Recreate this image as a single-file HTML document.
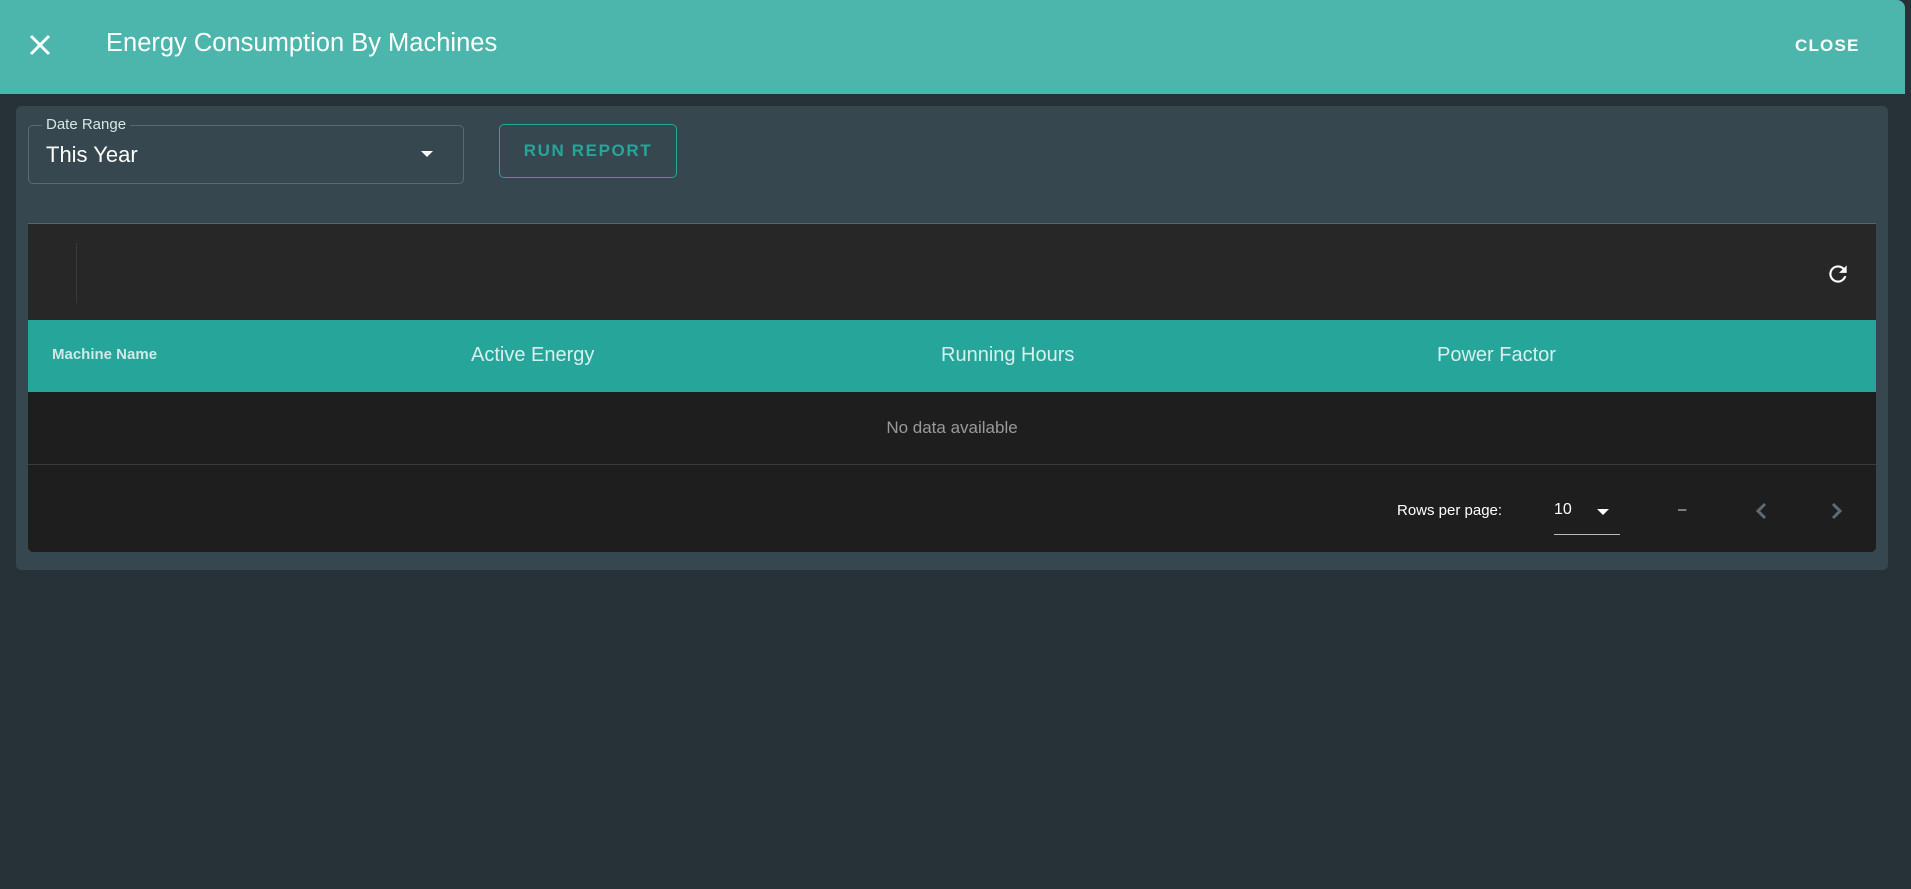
<!DOCTYPE html>
<html><head><style>
*{box-sizing:border-box;margin:0;padding:0}
body{width:1911px;height:889px;background:#263238;font-family:"Liberation Sans",sans-serif;position:relative;overflow:hidden}
.hdr{position:absolute;left:0;top:0;width:1905px;height:94px;background:#4db6ac;border-top-right-radius:8px}
.abs{position:absolute}
</style></head><body>
<div class="hdr">
<svg class="abs" style="left:28px;top:33px" width="24" height="24" viewBox="0 0 24 24"><path d="M3 3L21 21M21 3L3 21" stroke="#fff" stroke-width="3"/></svg>
<div class="abs" style="left:106px;top:29px;font-size:25.5px;color:#fff;">Energy Consumption By Machines</div>
<div class="abs" style="left:1795px;top:36px;font-size:17px;font-weight:bold;color:#fff;letter-spacing:1.2px">CLOSE</div>
</div>
<div class="abs" style="left:16px;top:106px;width:1872px;height:464px;background:#37474f;border-radius:5px"></div>
<div class="abs" style="left:28px;top:125px;width:436px;height:59px;border:1px solid #5b6a72;border-radius:5px"></div>
<div class="abs" style="left:42px;top:116px;padding:0 4px;background:#37474f;font-size:15px;color:#d4e7e4">Date Range</div>
<div class="abs" style="left:46px;top:142px;font-size:22px;color:#fff">This Year</div>
<div class="abs" style="left:421px;top:151px;width:0;height:0;border-left:6px solid transparent;border-right:6px solid transparent;border-top:6px solid #fff"></div>
<div class="abs" style="left:499px;top:124px;width:178px;height:54px;border:1px solid #26a69a;border-radius:5px;color:#26a69a;font-size:17px;font-weight:bold;letter-spacing:1.6px;text-align:center;line-height:52px">RUN REPORT</div>
<div class="abs" style="left:28px;top:223px;width:1848px;height:329px;background:#1e1e1e;border-radius:0 0 5px 5px;border-top:1px solid #56656c;overflow:hidden">
<div class="abs" style="left:0;top:0;width:100%;height:96px;background:#272727"></div>
<div class="abs" style="left:48px;top:19px;width:1px;height:60px;background:#3a3a3a"></div>
<svg class="abs" style="left:1797px;top:37px" width="26" height="26" viewBox="0 0 24 24"><path fill="#fff" d="M17.65 6.35A7.96 7.96 0 0 0 12 4a8 8 0 1 0 7.73 10h-2.08A6 6 0 1 1 12 6c1.66 0 3.14.69 4.22 1.78L13 11h7V4l-2.35 2.35z"/></svg>
<div class="abs" style="left:0;top:96px;width:100%;height:72px;background:#26a69a"></div>
<div class="abs" style="left:24px;top:122px;font-size:15px;font-weight:bold;color:#cdeae6">Machine Name</div>
<div class="abs" style="left:443px;top:120px;font-size:20px;color:#d9efec">Active Energy</div>
<div class="abs" style="left:913px;top:120px;font-size:20px;color:#d9efec">Running Hours</div>
<div class="abs" style="left:1409px;top:120px;font-size:20px;color:#d9efec">Power Factor</div>
<div class="abs" style="left:0;top:168px;width:100%;text-align:center;line-height:72px;font-size:17px;color:#9a9a9a">No data available</div>
<div class="abs" style="left:0;top:240px;width:100%;height:1px;background:#3c3a3a"></div>
<div class="abs" style="left:1369px;top:278px;font-size:15px;color:#fff">Rows per page:</div>
<div class="abs" style="left:1526px;top:277px;font-size:16px;color:#fff">10</div>
<div class="abs" style="left:1569px;top:285px;width:0;height:0;border-left:6px solid transparent;border-right:6px solid transparent;border-top:6px solid #fff"></div>
<div class="abs" style="left:1526px;top:310px;width:66px;height:1px;background:#bbb"></div>
<div class="abs" style="left:1650px;top:277px;font-size:15px;color:#ddd">–</div>
<svg class="abs" style="left:1722px;top:275px" width="24" height="24" viewBox="0 0 24 24"><path d="M15 5l-7 7 7 7" stroke="#5f6b72" stroke-width="3" fill="none"/></svg>
<svg class="abs" style="left:1796px;top:275px" width="24" height="24" viewBox="0 0 24 24"><path d="M9 5l7 7-7 7" stroke="#5f6b72" stroke-width="3" fill="none"/></svg>
</div>
</body></html>
